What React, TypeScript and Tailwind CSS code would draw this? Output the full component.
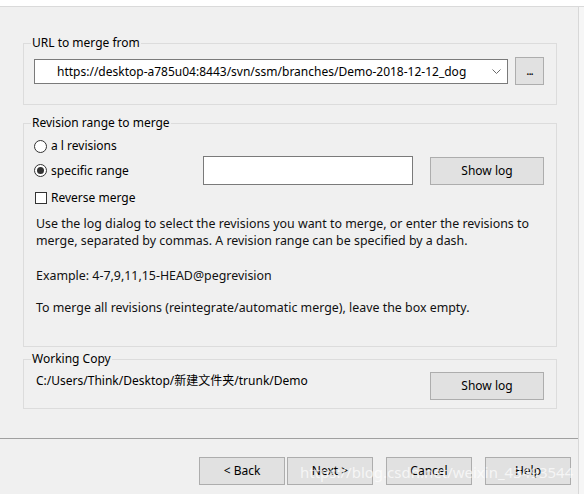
import { ReactNode } from 'react';

const font = { fontFamily: '"Noto Sans", "Noto Sans CJK SC", sans-serif' };

function GroupBox({ title, className, children }: { title: string; className: string; children: ReactNode }) {
  return (
    <fieldset className={`ml-[23px] w-[534px] border border-[#dcdcdc] ${className}`}>
      <legend className="ml-[7px] px-[1px] text-[12px] leading-[16px] text-black">{title}</legend>
      {children}
    </fieldset>
  );
}

function Button({ children, className = '' }: { children: ReactNode; className?: string }) {
  return (
    <button className={`flex items-center justify-center h-[28px] bg-[#e1e1e1] border border-[#adadad] text-[12px] text-black ${className}`}>
      {children}
    </button>
  );
}

function Radio({ checked }: { checked?: boolean }) {
  return (
    <span className="flex items-center justify-center w-[13px] h-[13px] rounded-full border border-[#333] bg-white">
      {checked && <span className="w-[7px] h-[7px] rounded-full bg-[#333]" />}
    </span>
  );
}

export default function App() {
  return (
    <div className="w-[584px] h-[494px] bg-[#f0f0f0] overflow-hidden relative text-black" style={font}>
      {/* top strip */}
      <div className="h-[7px] bg-white border-b border-[#dadada]" />

      <div className="flex h-[487px]">
        <div className="w-[578px] flex flex-col">
          {/* URL to merge from */}
          <GroupBox title="URL to merge from" className="mt-[28px] pt-[6px] pb-[19px]">
            <div className="flex items-center pl-[10px]">
              <div className="w-[474px] h-[25px] bg-white border border-[#7a7a7a] flex items-center pl-[22px] pr-[6px]">
                <span className="flex-1 text-[12px] leading-[17px] whitespace-nowrap">
                  https://desktop-a785u04:8443/svn/ssm/branches/Demo-2018-12-12_dog
                </span>
                <svg width="9" height="5" viewBox="0 0 9 5" className="ml-2">
                  <polyline points="0.5,0.5 4.5,4.5 8.5,0.5" fill="none" stroke="#6a6a6a" strokeWidth="1" />
                </svg>
              </div>
              <Button className="ml-[7px] w-[29px] h-[27px] text-[9px] tracking-[-1px]">...</Button>
            </div>
          </GroupBox>

          {/* Revision range */}
          <GroupBox title="Revision range to merge" className="mt-[10px] pb-[30px]">
            <div className="pl-[10px] pt-[5px] text-[12px]">
              <div className="h-[20px] flex items-center gap-[4px]">
                <Radio />
                <span>a l revisions</span>
              </div>
              <div className="h-[29px] flex items-center">
                <div className="w-[169px] flex items-center gap-[4px]">
                  <Radio checked />
                  <span>specific range</span>
                </div>
                <div className="w-[210px] h-[29px] bg-white border border-[#7a7a7a]" />
                <Button className="ml-[17px] w-[114px]">Show log</Button>
              </div>
              <div className="mt-[3px] h-[20px] flex items-center gap-[4px] pl-[1px]">
                <span className="w-[12px] h-[12px] border border-[#333] bg-white" />
                <span>Reverse merge</span>
              </div>
            </div>
            <div className="pl-[12px] pr-[12px] text-[12.4px] leading-[17px] text-[#111]">
              <p className="mt-[7px]">
                Use the log dialog to select the revisions you want to merge, or enter the revisions to merge, separated by commas. A revision range can be specified by a dash.
              </p>
              <p className="mt-[18px]">Example: 4-7,9,11,15-HEAD@pegrevision</p>
              <p className="mt-[15px]">To merge all revisions (reintegrate/automatic merge), leave the box empty.</p>
            </div>
          </GroupBox>

          {/* Working copy */}
          <GroupBox title="Working Copy" className="mt-[4px] pb-[8px]">
            <div className="flex items-start justify-between pt-[5px] pl-[12px] pr-[12px]">
              <span className="text-[12px] leading-[17px]">C:/Users/Think/Desktop/新建文件夹/trunk/Demo</span>
              <Button className="w-[114px]">Show log</Button>
            </div>
          </GroupBox>

          {/* separator */}
          <div className="mt-[29px] border-t border-[#a0a0a0]" />

          {/* wizard buttons */}
          <div className="mt-[18px] flex justify-end pr-[7px]">
            <Button className="w-[86px]">&lt; Back</Button>
            <Button className="ml-[2px] w-[86px]">Next &gt;</Button>
            <Button className="ml-[13px] w-[86px]">Cancel</Button>
            <Button className="ml-[13px] w-[86px]">Help</Button>
          </div>
        </div>
        <div className="flex-1 border-l border-[#d8d8d8] bg-[#f6f6f6]" />
      </div>

      {/* watermark */}
      <span className="absolute left-[300px] top-[462px] text-[15px] leading-[20px] text-white/70 whitespace-nowrap pointer-events-none">
        https://blog.csdn.net/weixin_43493544
      </span>
    </div>
  );
}
